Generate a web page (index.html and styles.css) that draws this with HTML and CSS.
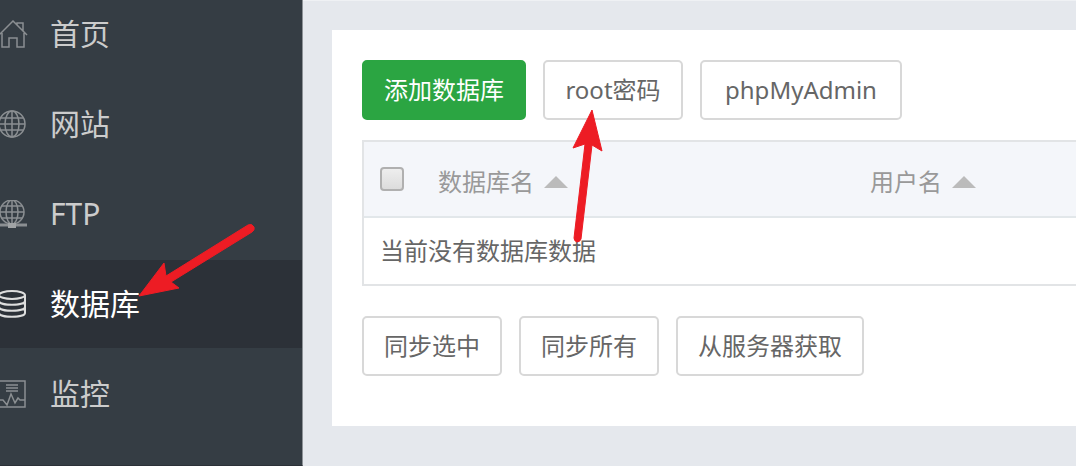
FILE: index.html
```html
<!DOCTYPE html>
<html lang="zh-CN">
<head>
    <meta charset="UTF-8">
    <title>数据库</title>
    <meta name="viewport" content="width=device-width, initial-scale=1.0">
    <link rel="stylesheet" href="styles.css">
</head>
<body>
    <div class="layout">
        <nav class="sidebar">
            <ul class="menu">
                <li>
                    <a href="#home">
                        <svg class="icon" viewBox="0 0 28 28">
                            <path d="M-1 15L13 1l14 14M2 13v14h7v-9h8v9h7V13M17 5V3h6v8"/>
                        </svg>
                        首页
                    </a>
                </li>
                <li>
                    <a href="#site">
                        <svg class="icon" viewBox="0 0 28 28">
                            <circle cx="12" cy="14" r="13"/>
                            <ellipse cx="12" cy="14" rx="7" ry="13"/>
                            <path d="M12 1v26M-1 14h26M1 8h22M1 20h22"/>
                        </svg>
                        网站
                    </a>
                </li>
                <li>
                    <a href="#ftp">
                        <svg class="icon" viewBox="0 0 28 28">
                            <circle cx="12" cy="12" r="12"/>
                            <ellipse cx="12" cy="12" rx="6" ry="12"/>
                            <path d="M12 0v24M0 12h24M2 6h20M2 18h20"/>
                            <path class="thick" d="M-2 25h29"/>
                            <rect class="solid" x="8" y="23" width="8" height="5"/>
                        </svg>
                        FTP
                    </a>
                </li>
                <li class="active">
                    <a href="#database">
                        <svg class="icon" viewBox="0 0 28 28">
                            <ellipse cx="12" cy="5" rx="13" ry="4"/>
                            <path d="M-1 5v18c0 5 26 5 26 0V5M-1 11c0 5 26 5 26 0M-1 17c0 5 26 5 26 0"/>
                        </svg>
                        数据库
                    </a>
                </li>
                <li>
                    <a href="#control">
                        <svg class="icon" viewBox="0 0 28 28">
                            <path d="M-2 1h27v26H-2M6 5h12M6 8h12M6 11h12M-1 20h4l4 5 4-11 4 9 3-5 2 2h5"/>
                        </svg>
                        监控
                    </a>
                </li>
            </ul>
        </nav>

        <main class="content">
            <section class="panel">
                <div class="toolbar">
                    <button type="button" class="btn btn-success">添加数据库</button>
                    <button type="button" class="btn">root密码</button>
                    <button type="button" class="btn btn-wide">phpMyAdmin</button>
                </div>

                <table class="data-table">
                    <thead>
                        <tr>
                            <th class="col-check"><input type="checkbox" aria-label="全选"></th>
                            <th class="col-name"><span class="sort">数据库名</span></th>
                            <th><span class="sort">用户名</span></th>
                        </tr>
                    </thead>
                    <tbody>
                        <tr>
                            <td colspan="3">当前没有数据库数据</td>
                        </tr>
                    </tbody>
                </table>

                <div class="toolbar">
                    <button type="button" class="btn">同步选中</button>
                    <button type="button" class="btn">同步所有</button>
                    <button type="button" class="btn">从服务器获取</button>
                </div>
            </section>
        </main>
    </div>

    <!-- red pointer arrows over the page -->
    <svg class="arrows" width="640" height="320" viewBox="0 0 640 320" aria-hidden="true">
        <path d="M139 296L164 263L166 276L248 225Q252 223 254 227Q255 230 252 232L171 282L179 288Z"/>
        <path d="M592 110L602 151L592 145L581 239Q580 242 577 242Q574 241 574 238L585 144L573 148Z"/>
    </svg>
</body>
</html>
```
FILE: styles.css
```css
* {
    box-sizing: border-box;
}

body {
    margin: 0;
    background: #e5e8ed;
    color: #666;
    font-family: "Noto Sans", "Noto Sans CJK SC", sans-serif;
    font-size: 24px;
    line-height: 36px;
}

.layout {
    display: flex;
    min-height: 100vh;
    overflow: hidden;
}

/* sidebar */
.sidebar {
    flex: 0 0 303px;
    background: #353d44;
    border-right: 1px solid #8d9297;
    border-bottom: 1px solid #2c3138;
}

.menu {
    list-style: none;
    margin: -10px 0 0;
    padding: 0;
}

.menu li {
    margin-bottom: 2px;
}

.menu a {
    display: flex;
    align-items: center;
    gap: 22px;
    height: 88px;
    color: #ccc;
    font-size: 30px;
    text-decoration: none;
}

.menu .active a {
    background: #2c3138;
    color: #fff;
}

.icon {
    width: 28px;
    height: 28px;
    fill: none;
    stroke: #8b8f92;
    stroke-width: 1.5;
}

.icon .thick {
    stroke-width: 3;
}

.icon .solid {
    fill: #a0a3a5;
    stroke: none;
}

.active .icon {
    stroke: #ddd;
    stroke-width: 2;
}

/* content */
.content {
    flex: 1;
    min-width: 0;
    padding: 29px 0 40px 29px;
    border-top: 1px solid #eff1f4;
}

.panel {
    background: #fff;
    padding: 30px 0 50px 30px;
}

.toolbar {
    display: flex;
    gap: 17px;
}

.btn {
    height: 60px;
    min-width: 140px;
    padding: 0 20px;
    background: #fff;
    border: 2px solid #d8d8d8;
    border-radius: 5px;
    color: #666;
    font: inherit;
    white-space: nowrap;
    cursor: pointer;
}

.btn-wide {
    min-width: 202px;
}

.btn-success {
    background: #2ba542;
    border-color: #2ba542;
    color: #fff;
}

.data-table {
    width: 100%;
    margin: 20px 0 30px;
    border: 2px solid #e2e4e6;
    border-right: none;
    border-spacing: 0;
    table-layout: fixed;
}

.data-table th {
    height: 76px;
    padding: 6px 16px 0;
    background: #f4f6fa;
    border-bottom: 2px solid #e2e7ea;
    color: #999;
    font-weight: normal;
    text-align: left;
}

.data-table td {
    height: 66px;
    padding: 0 16px;
}

.data-table .col-check {
    width: 58px;
    padding-top: 0;
}

.col-name {
    width: 432px;
}

.data-table input {
    appearance: none;
    display: block;
    width: 24px;
    height: 24px;
    margin: 0;
    background: linear-gradient(#eee, #dcdcdc);
    border: 2px solid #b0b0b0;
    border-radius: 4px;
}

.sort::after {
    content: "";
    display: inline-block;
    margin-left: 10px;
    border: 12px solid transparent;
    border-top: none;
    border-bottom-color: #bbb;
    vertical-align: 3px;
}

.arrows {
    position: absolute;
    top: 0;
    left: 0;
    fill: #ed1c24;
    stroke: #ed1c24;
    stroke-width: 1;
    pointer-events: none;
}
```
